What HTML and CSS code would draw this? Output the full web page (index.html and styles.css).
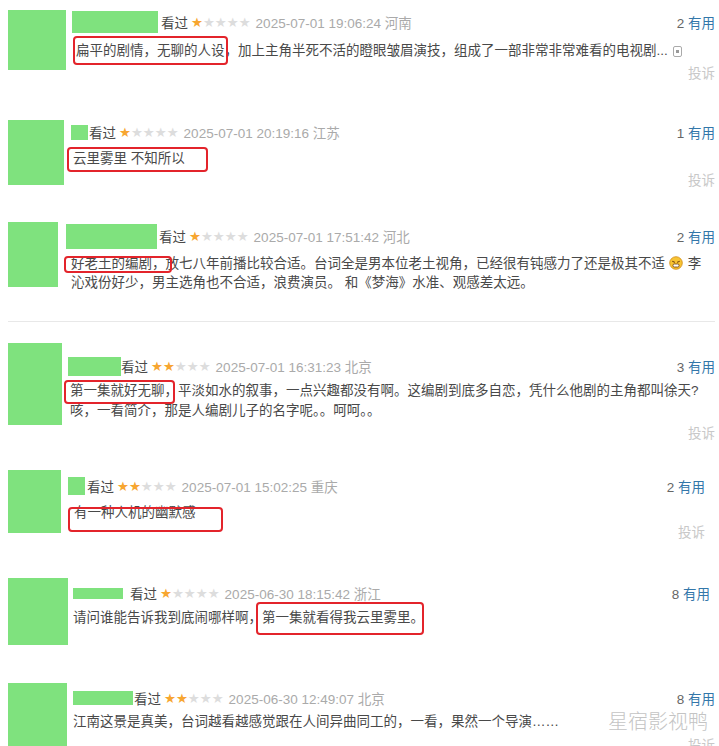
FILE: index.html
```html
<!DOCTYPE html>
<html lang="zh-CN">
<head>
  <meta charset="UTF-8">
  <title>短评</title>
  <link rel="stylesheet" href="styles.css">
</head>
<body>

<div class="feed">

  <div class="comment c1">
    <div class="avatar"></div>
    <div class="main">
      <div class="meta">
        <span class="uname"></span>
        <span class="status">看过</span>
        <span class="stars"><i>★</i>★★★★</span>
        <span class="time">2025-07-01 19:06:24 河南</span>
        <span class="votes"><b>2</b> 有用</span>
      </div>
      <p class="text"><span class="hl">扁平的剧情，无聊的人设</span>，加上主角半死不活的瞪眼皱眉演技，组成了一部非常非常难看的电视剧...<svg class="expand" width="9" height="11" viewBox="0 0 9 11"><rect x="0.5" y="0.5" width="8" height="10" rx="1.5" fill="none" stroke="#aaa"/><rect x="3" y="4" width="3" height="3" fill="#999"/></svg></p>
      <div class="report">投诉</div>
    </div>
  </div>

  <div class="comment c2">
    <div class="avatar"></div>
    <div class="main">
      <div class="meta">
        <span class="uname"></span>
        <span class="status">看过</span>
        <span class="stars"><i>★</i>★★★★</span>
        <span class="time">2025-07-01 20:19:16 江苏</span>
        <span class="votes"><b>1</b> 有用</span>
      </div>
      <p class="text"><span class="hl">云里雾里 不知所以</span></p>
      <div class="report">投诉</div>
    </div>
  </div>

  <div class="comment c3">
    <div class="avatar"></div>
    <div class="main">
      <div class="meta">
        <span class="uname"></span>
        <span class="status">看过</span>
        <span class="stars"><i>★</i>★★★★</span>
        <span class="time">2025-07-01 17:51:42 河北</span>
        <span class="votes"><b>2</b> 有用</span>
      </div>
      <p class="text"><span class="hl">好老土的编剧，</span>放七八年前播比较合适。台词全是男本位老土视角，已经很有钝感力了还是极其不适<svg class="emoji" width="14" height="14" viewBox="0 0 14 14"><circle cx="7" cy="7" r="6.3" fill="#f8c434" stroke="#d08a14" stroke-width="0.8"/><path d="M3.6 5.4l2 0.8M10.4 5.4l-2 0.8" stroke="#6b3b0c" stroke-width="1" stroke-linecap="round"/><rect x="4" y="8" width="6" height="3" rx="1.2" fill="#fff" stroke="#6b3b0c" stroke-width="0.8"/></svg> 李<br>沁戏份好少，男主选角也不合适，浪费演员。 和《梦海》水准、观感差太远。</p>
    </div>
  </div>

  <div class="divider"></div>

  <div class="comment c4">
    <div class="avatar"></div>
    <div class="main">
      <div class="meta">
        <span class="uname"></span>
        <span class="status">看过</span>
        <span class="stars"><i>★★</i>★★★</span>
        <span class="time">2025-07-01 16:31:23 北京</span>
        <span class="votes"><b>3</b> 有用</span>
      </div>
      <p class="text"><span class="hl">第一集就好无聊，</span>平淡如水的叙事，一点兴趣都没有啊。这编剧到底多自恋，凭什么他剧的主角都叫徐天?<br>咳，一看简介，那是人编剧儿子的名字呢。。呵呵。。</p>
      <div class="report">投诉</div>
    </div>
  </div>

  <div class="comment c5">
    <div class="avatar"></div>
    <div class="main">
      <div class="meta">
        <span class="uname"></span>
        <span class="status">看过</span>
        <span class="stars"><i>★★</i>★★★</span>
        <span class="time">2025-07-01 15:02:25 重庆</span>
        <span class="votes"><b>2</b> 有用</span>
      </div>
      <p class="text"><span class="hl">有一种人机的幽默感</span></p>
      <div class="report">投诉</div>
    </div>
  </div>

  <div class="comment c6">
    <div class="avatar"></div>
    <div class="main">
      <div class="meta">
        <span class="uname"></span>
        <span class="status">看过</span>
        <span class="stars"><i>★</i>★★★★</span>
        <span class="time">2025-06-30 18:15:42 浙江</span>
        <span class="votes"><b>8</b> 有用</span>
      </div>
      <p class="text">请问谁能告诉我到底闹哪样啊，<span class="hl">第一集就看得我云里雾里。</span></p>
    </div>
  </div>

  <div class="comment c7">
    <div class="avatar"></div>
    <div class="main">
      <div class="meta">
        <span class="uname"></span>
        <span class="status">看过</span>
        <span class="stars"><i>★★</i>★★★</span>
        <span class="time">2025-06-30 12:49:07 北京</span>
        <span class="votes"><b>8</b> 有用</span>
      </div>
      <p class="text">江南这景是真美，台词越看越感觉跟在人间异曲同工的，一看，果然一个导演……</p>
      <div class="report">投诉</div>
    </div>
    <div class="watermark">星宿影视鸭</div>
  </div>

</div>

</body>
</html>
```

FILE: styles.css
```css
* {
  box-sizing: border-box;
}

body {
  margin: 0;
  width: 719px;
  height: 746px;
  overflow: hidden;
  background: #fff;
  font-family: "Liberation Sans", "Noto Sans CJK SC", sans-serif;
  font-size: 13.5px;
  color: #494949;
}

.comment {
  position: relative;
  display: flex;
  align-items: flex-start;
  height: var(--h);
  padding: var(--pt) var(--pr) 0 8px;
}

.avatar {
  flex: none;
  width: var(--aw);
  height: var(--ah);
  background: #7fe27e;
}

.main {
  flex: 1;
  min-width: 0;
  margin-left: var(--gap);
  padding-top: var(--mt);
}

.meta {
  display: flex;
  align-items: center;
  height: 24px;
  white-space: nowrap;
}

.uname {
  flex: none;
  width: var(--uw);
  height: var(--uh);
  margin-right: var(--ug);
  background: #7fe27e;
}

.status {
  color: #4a4a4a;
}

.stars {
  margin: 0 5px 0 3px;
  font-family: "DejaVu Sans", sans-serif;
  font-size: 13.3px;
  color: #ddd;
}

.stars i {
  font-style: normal;
  color: #f7a630;
}

.time {
  color: #aaa;
}

.votes {
  margin-left: auto;
  color: #3377aa;
}

.votes b {
  font-weight: normal;
  color: #666;
}

.text {
  margin: var(--tm) 0 0;
  padding-left: var(--tx);
  line-height: var(--lh);
  white-space: nowrap;
}

.hl {
  position: relative;
  display: inline-block;
}

.hl::after {
  content: "";
  position: absolute;
  top: var(--bt);
  right: var(--br);
  bottom: var(--bb);
  left: var(--bl);
  border: 2px solid #e3242b;
  border-radius: 4px;
}

.expand {
  margin-left: 5px;
  vertical-align: -2px;
}

.emoji {
  margin: 0 1px 0 4px;
  vertical-align: -2px;
}

.report {
  margin-top: var(--rm);
  line-height: 20px;
  text-align: right;
  color: #c8c8c8;
}

.divider {
  height: 1px;
  margin: 0 4px 0 8px;
  background: #e8e8e8;
}

.watermark {
  position: absolute;
  right: 11px;
  bottom: 11px;
  font-family: "Noto Sans CJK SC", sans-serif;
  font-size: 20px;
  font-weight: 300;
  color: #c4c4c4;
}

/* per-comment geometry */
.c1 {
  --h: 120px; --pt: 10px; --pr: 4px;
  --aw: 58px; --ah: 60px; --gap: 6px; --mt: 0px;
  --uw: 86px; --uh: 22px; --ug: 3px;
  --tm: 7px; --tx: 4px; --lh: 20px; --rm: 3px;
  --bt: -5px; --br: -3px; --bb: -4px; --bl: -3px;
}

.c2 {
  --h: 101px; --pt: 0px; --pr: 4px;
  --aw: 56px; --ah: 65px; --gap: 7px; --mt: 0px;
  --uw: 17px; --uh: 15px; --ug: 1px;
  --tm: 5px; --tx: 2px; --lh: 20px; --rm: 2px;
  --bt: -2px; --br: -23px; --bb: -3px; --bl: -6px;
}

.c3 {
  --h: 100px; --pt: 1px; --pr: 4px;
  --aw: 50px; --ah: 65px; --gap: 8px; --mt: 2px;
  --uw: 91px; --uh: 25px; --ug: 2px;
  --tm: 6px; --tx: 5px; --lh: 19px; --rm: 0px;
  --bt: 2px; --br: -6px; --bb: 0px; --bl: -7px;
}

.c4 {
  --h: 138px; --pt: 21px; --pr: 4px;
  --aw: 54px; --ah: 82px; --gap: 6px; --mt: 11px;
  --uw: 53px; --uh: 19px; --ug: 0px;
  --tm: 3px; --tx: 2px; --lh: 20px; --rm: 3px;
  --bt: -1px; --br: 3px; --bb: -3px; --bl: -6px;
}

.c5 {
  --h: 110px; --pt: 10px; --pr: 14px;
  --aw: 53px; --ah: 63px; --gap: 7px; --mt: 4px;
  --uw: 17px; --uh: 18px; --ug: 2px;
  --tm: 5px; --tx: 6px; --lh: 20px; --rm: 0px;
  --bt: 4px; --br: -27px; --bb: -9px; --bl: -6px;
}

.c6 {
  --h: 105px; --pt: 8px; --pr: 9px;
  --aw: 60px; --ah: 67px; --gap: 5px; --mt: 3px;
  --uw: 50px; --uh: 11px; --ug: 7px;
  --tm: 3px; --tx: 0px; --lh: 20px; --rm: 0px;
  --bt: -6px; --br: 0px; --bb: -7px; --bl: -6px;
}

.c7 {
  --h: 71px; --pt: 8px; --pr: 4px;
  --aw: 59px; --ah: 70px; --gap: 6px; --mt: 3px;
  --uw: 60px; --uh: 14px; --ug: 1px;
  --tm: 2px; --tx: 0px; --lh: 20px; --rm: 4px;
}
```
